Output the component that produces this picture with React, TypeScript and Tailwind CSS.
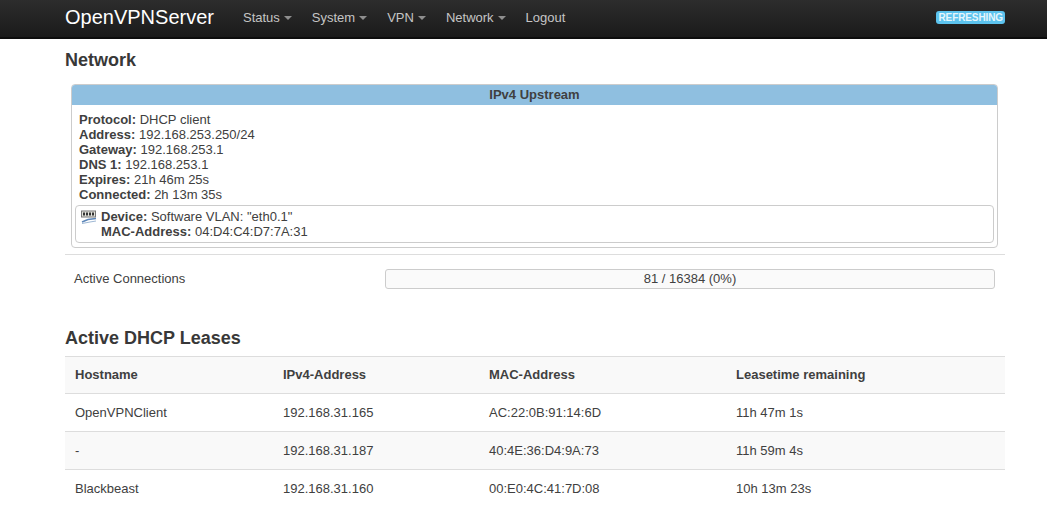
import React from "react";

const font = { fontFamily: '"Liberation Sans", Arial, sans-serif' };

function NavItem({ label, caret = true }: { label: string; caret?: boolean }) {
  return (
    <span className="flex items-center gap-[4px] text-[13px] text-[#c5c5c5]">
      {label}
      {caret && <span className="mt-[1px] h-0 w-0 border-x-[4px] border-t-[4px] border-x-transparent border-t-[#8f8f8f]" />}
    </span>
  );
}

const leases = [
  ["OpenVPNClient", "192.168.31.165", "AC:22:0B:91:14:6D", "11h 47m 1s"],
  ["-", "192.168.31.187", "40:4E:36:D4:9A:73", "11h 59m 4s"],
  ["Blackbeast", "192.168.31.160", "00:E0:4C:41:7D:08", "10h 13m 23s"],
];

function Row({ k, v }: { k: string; v: string }) {
  return (
    <div className="h-[15px] leading-[15px]">
      <b className="font-bold">{k}</b> {v}
    </div>
  );
}

export default function App() {
  return (
    <div className="h-[521px] w-[1047px] overflow-hidden bg-white text-[13px] text-[#404040]" style={font}>
      <div className="flex h-[39px] items-center border-b-[2px] border-[#0d0d0d] bg-gradient-to-b from-[#2d2d2d] to-[#1a1a1a] pb-[2px] pl-[65px] pr-[42px]">
        <span className="mb-[1px] mr-[29px] text-[20px] leading-[24px] text-white">OpenVPNServer</span>
        <div className="flex items-center gap-[20px]">
          <NavItem label="Status" />
          <NavItem label="System" />
          <NavItem label="VPN" />
          <NavItem label="Network" />
          <NavItem label="Logout" caret={false} />
        </div>
        <span className="mb-[1px] ml-auto rounded-[3px] bg-[#5cc3ee] px-[2px] text-[10px] font-bold leading-[13px] tracking-[-0.1px] text-[#e6f6fc]">REFRESHING</span>
      </div>
      <div className="pl-[65px] pr-[42px]">
        <h2 className="mt-[10px] text-[18px] font-bold leading-[22px] text-[#383838]">Network</h2>
        <div className="ml-[6px] mr-[7px] mt-[13px] rounded-[4px] border border-[#ccc] pb-[4px]">
          <div className="h-[20px] rounded-t-[3px] bg-[#8fbfe0] text-center font-bold leading-[20px]">IPv4 Upstream</div>
          <div className="px-[7px] pt-[7px] pb-[3px]">
            <Row k="Protocol:" v="DHCP client" />
            <Row k="Address:" v="192.168.253.250/24" />
            <Row k="Gateway:" v="192.168.253.1" />
            <Row k="DNS 1:" v="192.168.253.1" />
            <Row k="Expires:" v="21h 46m 25s" />
            <Row k="Connected:" v="2h 13m 35s" />
          </div>
          <div className="mx-[3px] flex h-[38px] rounded-[4px] border border-[#ccc] px-[5px] pt-[3px]">
            <svg width="16" height="14" viewBox="0 0 16 14" className="mr-[4px] mt-[1px]">
              <rect x="0.5" y="1" width="14" height="6" fill="#e4e4dc" stroke="#777" />
              <rect x="2" y="2.5" width="2" height="3" fill="#333" />
              <rect x="5" y="2.5" width="2" height="3" fill="#333" />
              <rect x="8" y="2.5" width="2" height="3" fill="#333" />
              <rect x="11" y="2.5" width="2" height="3" fill="#333" />
              <path d="M1 12 L7 9.5 L15 8.5" fill="none" stroke="#5c86b8" strokeWidth="1.5" />
              <path d="M1 13.5 L9 12 L15 11" fill="none" stroke="#9db7d4" strokeWidth="1" />
            </svg>
            <div>
              <Row k="Device:" v='Software VLAN: "eth0.1"' />
              <Row k="MAC-Address:" v="04:D4:C4:D7:7A:31" />
            </div>
          </div>
        </div>
        <div className="mt-[6px] flex h-[48px] items-start border-t border-[#ddd] pt-[14px]">
          <span className="ml-[9px] mt-[1px] w-[311px] leading-[18px]">Active Connections</span>
          <div className="h-[20px] w-[610px] rounded-[3px] border border-[#ccc] bg-[#fafafa] text-center leading-[18px]">81 / 16384 (0%)</div>
        </div>
        <h2 className="mt-[25px] text-[18px] font-bold leading-[22px] text-[#383838]">Active DHCP Leases</h2>
        <div className="mt-[7px]">
          <div className="flex h-[38px] items-center border-y border-[#ddd] bg-[#f9f9f9] pb-[1px] font-bold">
            <span className="w-[208px] pl-[10px]">Hostname</span>
            <span className="w-[206px] pl-[10px]">IPv4-Address</span>
            <span className="w-[247px] pl-[10px]">MAC-Address</span>
            <span className="pl-[10px]">Leasetime remaining</span>
          </div>
          {leases.map((r, i) => (
            <div key={i} className={`flex h-[38px] items-center ${i < 2 ? "border-b border-[#ddd]" : ""} ${i === 1 ? "bg-[#f9f9f9]" : ""}`}>
              <span className="w-[208px] pl-[10px]">{r[0]}</span>
              <span className="w-[206px] pl-[10px]">{r[1]}</span>
              <span className="w-[247px] pl-[10px]">{r[2]}</span>
              <span className="pl-[10px]">{r[3]}</span>
            </div>
          ))}
        </div>
      </div>
    </div>
  );
}
